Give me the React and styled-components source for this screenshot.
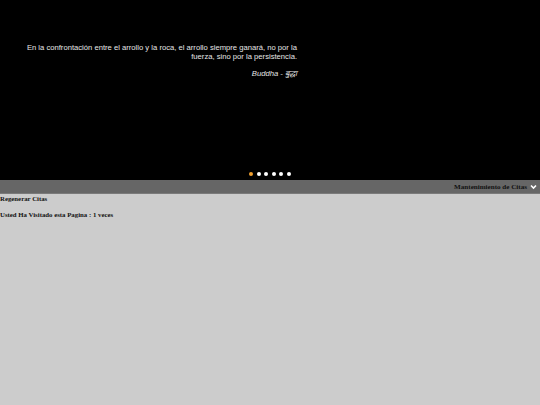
import React from "react";
import styled, { createGlobalStyle } from "styled-components";

const Global = createGlobalStyle`
  html, body { margin: 0; padding: 0; background: #cccccc; }
  body { font-family: "Liberation Serif", "Times New Roman", serif; }
`;

const Slider = styled.section`
  height: 180px;
  background: #000;
  display: flex;
  flex-direction: column;
  justify-content: space-between;
  box-sizing: border-box;
  padding: 43px 0 4px;
`;

const Quote = styled.blockquote`
  margin: 0 0 0 24px;
  width: 273px;
  text-align: right;
  font-family: "Liberation Sans", Arial, sans-serif;
  font-size: 7.65px;
  line-height: 9px;
  color: #e6e6e6;
`;

const Author = styled.p`
  margin: 8px 0 0;
  font-style: italic;
`;

const Dots = styled.div`
  display: flex;
  justify-content: center;
  gap: 3.5px;
`;

const Dot = styled.span`
  width: 4px;
  height: 4px;
  border-radius: 50%;
  background: ${(p) => (p.$active ? "#f0a030" : "#ffffff")};
`;

const Bar = styled.div`
  height: 14px;
  background: #666666;
  border-bottom: 1px solid #7a7a7a;
  box-sizing: border-box;
  display: flex;
  align-items: center;
  justify-content: flex-end;
  padding-right: 3px;
  gap: 3px;
`;

const BarLabel = styled.span`
  font-size: 7.1px;
  font-weight: bold;
  color: #111;
`;

const Content = styled.main`
  padding-top: 1px;
`;

const Line = styled.p`
  margin: 0 0 ${(p) => p.$gap || 0}px;
  font-size: 6.8px;
  font-weight: bold;
  line-height: 8px;
  color: #111;
`;

export default function App() {
  return (
    <>
      <Global />
      <Slider>
        <Quote>
          En la confrontación entre el arrollo y la roca, el arrollo siempre ganará, no por la fuerza, sino por la persistencia.
          <Author>Buddha - बुद्धा</Author>
        </Quote>
        <Dots>
          {[0, 1, 2, 3, 4, 5].map((i) => (
            <Dot key={i} $active={i === 0} />
          ))}
        </Dots>
      </Slider>
      <Bar>
        <BarLabel>Mantenimiento de Citas</BarLabel>
        <svg width="7" height="6" viewBox="0 0 7 6">
          <path d="M1 1.5 L3.5 4 L6 1.5" fill="none" stroke="#fff" strokeWidth="1.6" />
        </svg>
      </Bar>
      <Content>
        <Line $gap={8}>Regenerar Citas</Line>
        <Line>Usted Ha Visitado esta Pagina : 1 veces</Line>
      </Content>
    </>
  );
}
